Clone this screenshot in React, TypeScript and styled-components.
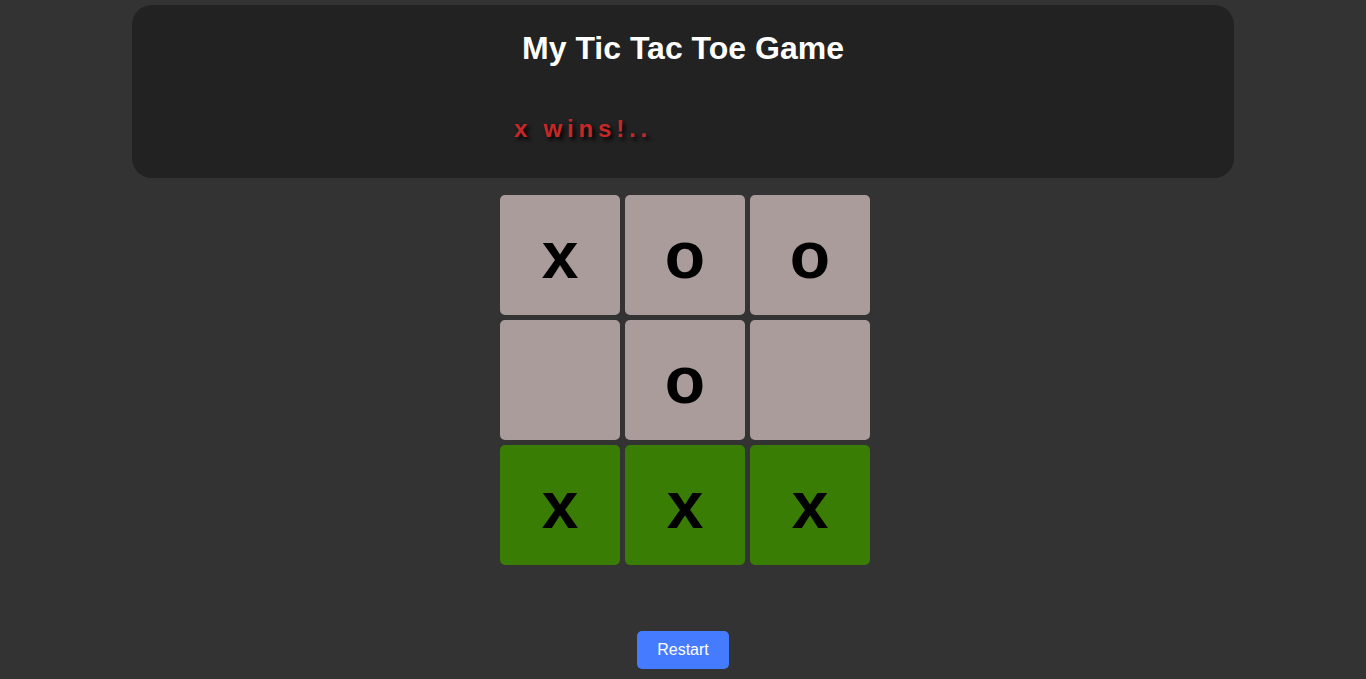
import React from "react";
import styled, { createGlobalStyle } from "styled-components";

const Global = createGlobalStyle`
  html, body { margin: 0; padding: 0; background: #333333; }
  body { font-family: "Liberation Sans", Arial, sans-serif; }
`;

const Page = styled.div`
  display: flex;
  flex-direction: column;
  align-items: center;
  padding-top: 5px;
  min-height: 679px;
  box-sizing: border-box;
`;

const Header = styled.header`
  width: 1102px;
  background: #222222;
  border-radius: 20px;
  padding: 25px 0 35px;
  box-sizing: border-box;
  display: flex;
  flex-direction: column;
  align-items: center;
`;

const Title = styled.h1`
  margin: 0;
  font-size: 32px;
  line-height: 37px;
  font-weight: 700;
  color: #ffffff;
`;

const Status = styled.div`
  margin-top: 48px;
  margin-left: 4px;
  width: 370px;
  padding-left: 14px;
  box-sizing: border-box;
  font-size: 24px;
  line-height: 28px;
  font-weight: 700;
  letter-spacing: 4.8px;
  color: #c62828;
  text-shadow: 3px 3px 4px #000000;
`;

const Board = styled.div`
  margin-top: 17px;
  margin-left: 4px;
  display: grid;
  grid-template-columns: repeat(3, 120px);
  grid-auto-rows: 120px;
  gap: 5px;
`;

const Cell = styled.div<{ $win?: boolean }>`
  background: ${(p) => (p.$win ? "#3a7d04" : "#ab9c9c")};
  border-radius: 5px;
  display: flex;
  align-items: center;
  justify-content: center;
  font-size: 66px;
  font-weight: 700;
  color: #000000;
`;

const RestartButton = styled.button`
  margin-top: 66px;
  width: 92px;
  height: 38px;
  border: none;
  border-radius: 5px;
  background: #457bff;
  color: #ffffff;
  font-family: "Liberation Sans", Arial, sans-serif;
  font-size: 16px;
  cursor: pointer;
`;

const board = ["x", "o", "o", "", "o", "", "x", "x", "x"];
const winLine = [6, 7, 8];

export default function App() {
  return (
    <>
      <Global />
      <Page>
        <Header>
          <Title>My Tic Tac Toe Game</Title>
          <Status>x wins!..</Status>
        </Header>
        <Board>
          {board.map((v, i) => (
            <Cell key={i} $win={winLine.includes(i)}>
              {v}
            </Cell>
          ))}
        </Board>
        <RestartButton>Restart</RestartButton>
      </Page>
    </>
  );
}
